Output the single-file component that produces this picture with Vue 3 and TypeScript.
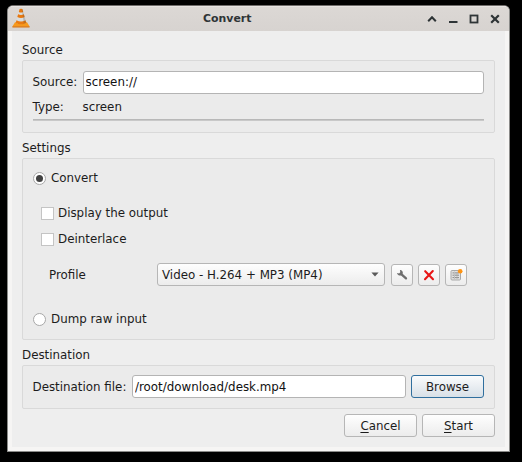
<script setup lang="ts">
import { ref } from 'vue'

const mode = ref<'convert' | 'dump'>('convert')
const displayOutput = ref(false)
const deinterlace = ref(false)
const source = ref('screen://')
const destination = ref('/root/download/desk.mp4')
const profile = ref('Video - H.264 + MP3 (MP4)')
</script>

<template>
  <div class="desktop">
    <div class="window">
      <header class="titlebar">
        <svg class="cone" width="18" height="20" viewBox="0 0 18 20">
          <path d="M3 14.2 L15 14.2 L17.6 18.6 H0.4 Z" fill="#f79a1c" />
          <path d="M0.4 18.2 H17.6 V19.6 H0.4Z" fill="#dc7208" />
          <path d="M7.6 1 Q9 0.4 10.4 1 L14.2 14.6 Q9 18 3.8 14.6 Z" fill="#d9dcdc" />
          <path d="M7.6 1 Q9 0.4 10.4 1 L11.2 4 Q9 5 6.8 4 Z" fill="#e8780f" />
          <path d="M6.1 6.2 Q9 7.6 11.9 6.2 L12.7 9 Q9 10.9 5.3 9 Z" fill="#e8780f" />
          <path d="M4.5 12.2 Q9 14.8 13.5 12.2 L14.3 14.8 Q9 18 3.7 14.8 Z" fill="#ea7a10" />
          <path d="M10.4 1 L14.2 14.8 L11.8 15.9 L9.8 1Z" fill="#444" opacity=".22" />
        </svg>
        <span class="title">Convert</span>
        <svg class="controls" width="76" height="12" viewBox="0 0 76 12" fill="none" stroke="#2e3436" stroke-width="2">
          <path d="M1.2 8.2 L5 4.2 L8.8 8.2" />
          <path d="M22 9 H30.5" />
          <rect x="43.5" y="2.5" width="7" height="7" stroke-width="1.8" />
          <path d="M64.2 2.2 L71.8 9.8 M71.8 2.2 L64.2 9.8" stroke-width="2.2" />
        </svg>
      </header>

      <main class="content">
        <h2>Source</h2>
        <section class="group source-group">
          <div class="row source-row">
            <label>Source:</label>
            <input v-model="source" type="text" />
          </div>
          <div class="row type-row">
            <label>Type:</label>
            <span>screen</span>
          </div>
          <div class="rule"></div>
        </section>

        <h2>Settings</h2>
        <section class="group settings-group">
          <div class="option convert" @click="mode = 'convert'">
            <span class="radio"><i v-if="mode === 'convert'"></i></span>
            <span>Convert</span>
          </div>
          <div class="option sub" @click="displayOutput = !displayOutput">
            <span class="check"><i v-if="displayOutput"></i></span>
            <span>Display the output</span>
          </div>
          <div class="option sub deinterlace" @click="deinterlace = !deinterlace">
            <span class="check"><i v-if="deinterlace"></i></span>
            <span>Deinterlace</span>
          </div>
          <div class="profile-row">
            <label>Profile</label>
            <div class="combo">
              <span>{{ profile }}</span>
              <svg width="8" height="5" viewBox="0 0 8 5"><path d="M0.4 0.5 H7.6 L4 4.4 Z" fill="#5a5a5a" /></svg>
            </div>
            <button class="tool" aria-label="Edit profile">
              <svg width="14" height="14" viewBox="0 0 14 14">
                <path d="M6 5.8 L11 10.4" stroke="#6e6e6e" stroke-width="2.3" stroke-linecap="round" />
                <path d="M4.9 2.1 A2.6 2.6 0 0 1 7.8 5.2 L6.4 7.2 A3 3 0 0 1 2 4.9 L4.1 5.4 L5.3 4.2 Z" fill="#6e6e6e" />
              </svg>
            </button>
            <button class="tool" aria-label="Delete profile">
              <svg width="14" height="14" viewBox="0 0 14 14">
                <path d="M3.2 3.2 L11 11.2 M10.8 3 L3 11.2" fill="none" stroke="#e81616" stroke-width="2.1" stroke-linecap="round" />
              </svg>
            </button>
            <button class="tool" aria-label="New profile">
              <svg width="14" height="14" viewBox="0 0 14 14">
                <rect x="2" y="2.5" width="9.5" height="9.5" rx="1" fill="#e2e2e0" stroke="#a8a8a8" />
                <path d="M3.5 4.9 H5 M6 4.9 H10 M3.5 7.2 H5 M6 7.2 H10 M3.5 9.6 H5 M6 9.6 H10" stroke="#8c8c8c" />
                <path d="M5.5 3.5 V11 M8 4 V11" stroke="#aaa" stroke-width=".6" />
                <circle cx="11.2" cy="3.3" r="2.3" fill="#ff9412" />
              </svg>
            </button>
          </div>
          <div class="option dump" @click="mode = 'dump'">
            <span class="radio"><i v-if="mode === 'dump'"></i></span>
            <span>Dump raw input</span>
          </div>
        </section>

        <h2>Destination</h2>
        <section class="group destination-group">
          <label>Destination file:</label>
          <input v-model="destination" type="text" />
          <button class="push focused">Browse</button>
        </section>

        <footer>
          <button class="push"><u>C</u>ancel</button>
          <button class="push"><u>S</u>tart</button>
        </footer>
      </main>
    </div>
  </div>
</template>

<style>
body {
  background: #000;
  overflow: hidden;
}
</style>

<style scoped>
* {
  box-sizing: border-box;
}
.desktop {
  width: 522px;
  height: 462px;
  padding: 5px 12.5px 10px 7px;
  background: #000;
  font: 11.87px/16px 'DejaVu Sans', sans-serif;
  color: #1c1c1c;
}
.window {
  height: 446.5px;
  border: 1px solid #8a8a88;
  border-top-color: #6e6b69;
  border-radius: 6px 6px 0 0;
  background: #f6f5f4;
  overflow: hidden;
}
.titlebar {
  display: flex;
  align-items: center;
  height: 25px;
  padding: 0 6px 0 5px;
  background: linear-gradient(#dcd8d5, #d7d3d0);
  box-shadow: inset 0 1px #e6e3e1;
}
.cone {
  flex: none;
  margin: 0 0 1px -1px;
}
.title {
  flex: 1;
  padding: 1px 2px 0 0;
  text-align: center;
  font-weight: bold;
  font-size: 10.9px;
  color: #2e3436;
}
.controls {
  flex: none;
  margin-top: 1px;
}
.content {
  height: 416px;
  margin: 0 4px;
  padding: 10px 9.5px 0 10px;
  background: #eeeeee;
}
h2 {
  height: 19px;
  margin: 0;
  padding-top: 1px;
  font: inherit;
}
.group {
  border: 1px solid #d9d9d9;
  border-radius: 2px;
  background: #ebebeb;
}
.source-group {
  height: 73px;
  margin-bottom: 6px;
  padding: 9px 10px 9px 9.5px;
}
.row {
  display: flex;
  align-items: center;
}
.row label {
  width: 50px;
  flex: none;
}
.source-row {
  height: 24px;
}
.type-row {
  height: 25px;
}
.rule {
  height: 2px;
  border-top: 1px solid #b8b8b8;
  background: #c8c8c8;
}
input {
  flex: 1;
  min-width: 0;
  height: 23px;
  padding: 0 2px;
  border: 1px solid #b4b4b4;
  border-radius: 3px;
  outline: 0;
  background: #fff;
  font: inherit;
  color: #111;
}
.settings-group {
  height: 182px;
  margin-bottom: 6px;
  padding: 11px 10px 11px 9.5px;
}
.option {
  display: flex;
  align-items: center;
  height: 16px;
}
.radio,
.check {
  display: flex;
  align-items: center;
  justify-content: center;
  flex: none;
  width: 13px;
  height: 13px;
  border: 1px solid #a8a8a8;
  background: #fff;
}
.radio {
  margin-right: 5.5px;
  border-radius: 50%;
}
.radio i {
  width: 7px;
  height: 7px;
  border-radius: 50%;
  background: #424242;
}
.check {
  margin-right: 4.5px;
  border-color: #c4c4c4;
}
.check i {
  width: 7px;
  height: 7px;
  background: #424242;
}
.sub {
  margin: 19px 0 0 8px;
}
.deinterlace {
  margin-top: 10px;
}
.profile-row {
  display: flex;
  align-items: center;
  height: 23px;
  margin: 16px 0 0 16.5px;
}
.profile-row label {
  width: 108px;
}
.combo {
  display: flex;
  align-items: center;
  justify-content: space-between;
  width: 228px;
  height: 23px;
  margin-right: 6px;
  padding: 0 5px 0 4px;
}
.combo,
.tool,
.push {
  border: 1px solid #b6b6b6;
  border-radius: 3px;
  background: linear-gradient(#fefefe, #ececec);
}
.tool {
  display: flex;
  align-items: center;
  justify-content: center;
  width: 22px;
  height: 22px;
  margin-right: 5px;
  padding: 0;
}
.dump {
  margin-top: 25px;
}
.destination-group {
  display: flex;
  align-items: center;
  height: 44px;
  padding: 0 10px 1px 9.5px;
}
.destination-group label {
  width: 99.5px;
}
.push {
  width: 73px;
  height: 23px;
  padding: 0;
  font: inherit;
  color: #1c1c1c;
}
.push u {
  text-underline-offset: 2px;
}
.focused {
  margin-left: 5px;
  border-color: #306f9e;
  background: linear-gradient(#fafbfc, #d8e0e7);
}
footer {
  display: flex;
  justify-content: flex-end;
  gap: 5px;
  margin-top: 5px;
}
</style>
